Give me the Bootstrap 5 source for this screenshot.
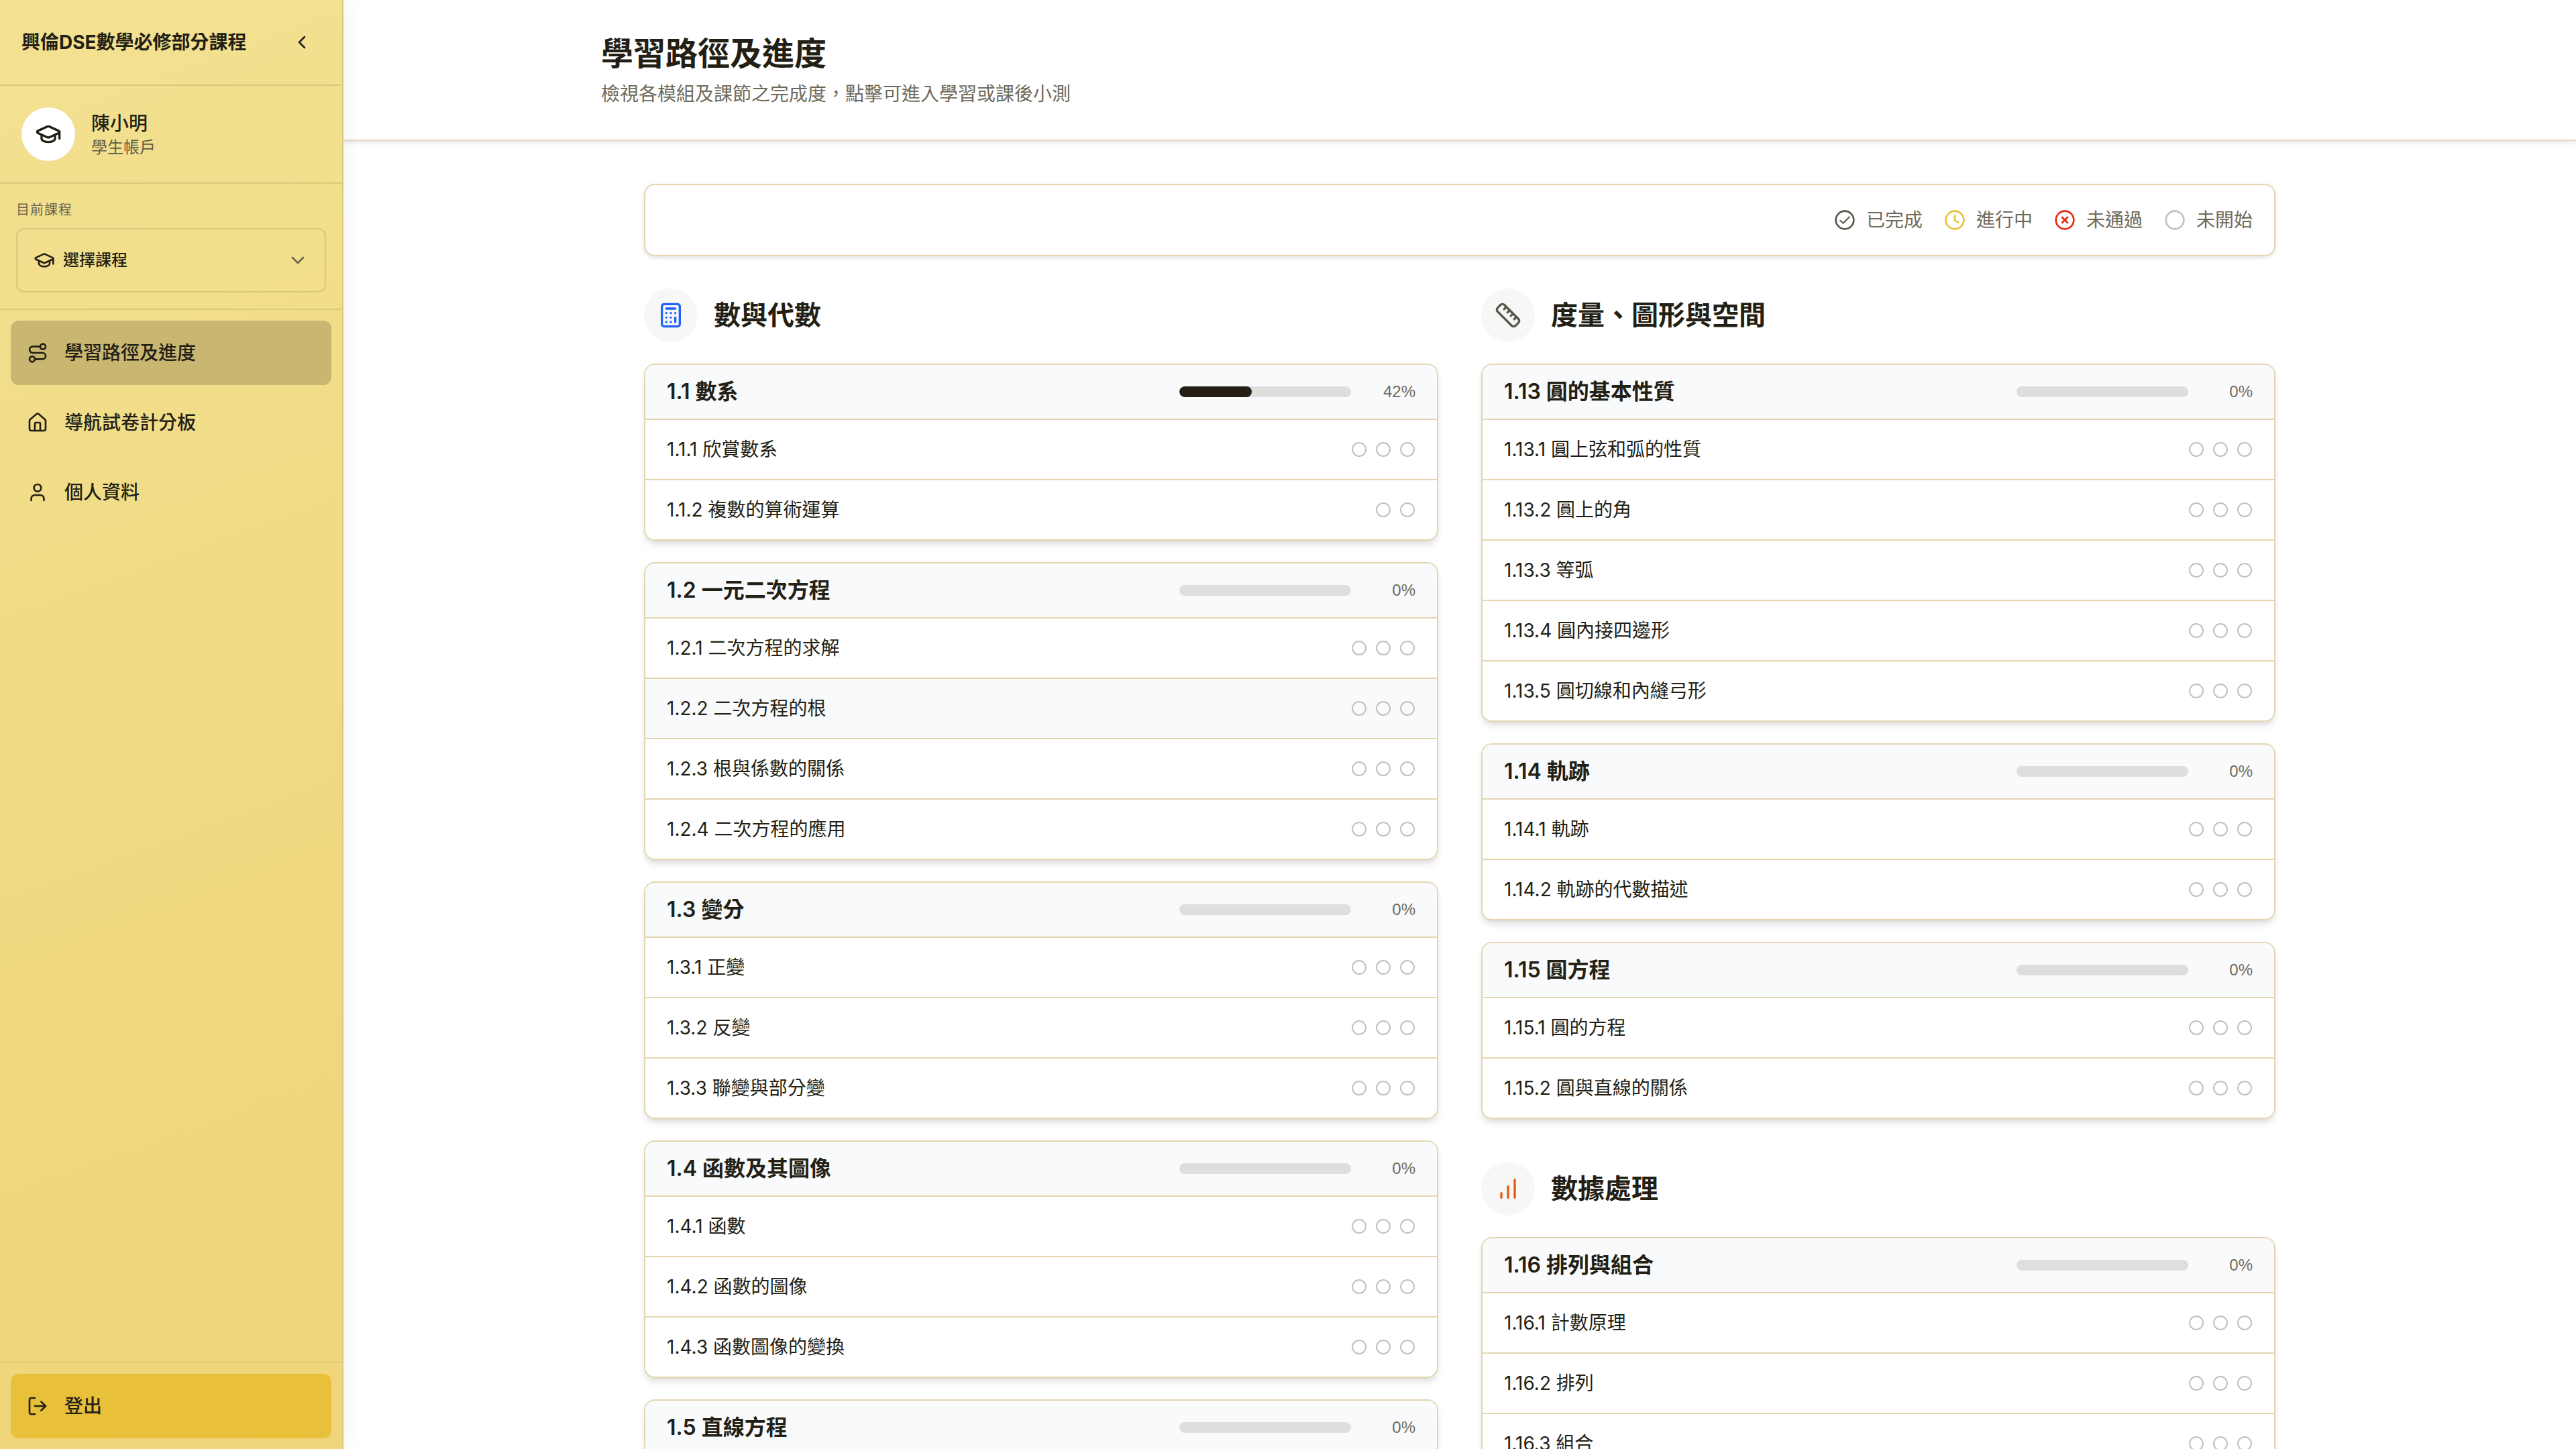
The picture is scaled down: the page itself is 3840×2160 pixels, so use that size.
<!DOCTYPE html>
<html lang="zh-Hant">
<head>
<meta charset="utf-8">
<meta name="viewport" content="width=device-width, initial-scale=1">
<title>學習路徑及進度</title>
<link href="https://cdn.jsdelivr.net/npm/bootstrap@5.3.0/dist/css/bootstrap.min.css" rel="stylesheet">
<style>
  :root { --ink: #231f15; --muted-ink: #6f6a5a; --line: #e3d6b0; --side-line: #dbc97c; }
  body { font-family: Inter, "Noto Sans CJK TC", sans-serif; font-size: 28px; line-height: 40px; color: var(--ink); background: #fff; }
  a { color: inherit; text-decoration: none; }
  svg { flex: none; fill: none; stroke: currentColor; stroke-width: 2; stroke-linecap: round; stroke-linejoin: round; display: block; }
  .i-24 { width: 24px; height: 24px; } .i-32 { width: 32px; height: 32px; } .i-40 { width: 40px; height: 40px; }
  .c-done, .c-ruler { color: #55584a; } .c-doing { color: #eac03a; } .c-fail { color: #e7290c; } .c-none { color: #c1c1bd; }
  .c-calc { color: #1e62fb; } .c-bars { color: #e8590c; }

  .side { width: 512px; border-right: 2px solid var(--side-line); background: linear-gradient(160deg, #f3e192 0%, #f1dc86 40%, #f0d67c 75%, #f0d57a 100%); box-shadow: 4px 0 24px rgba(30, 50, 80, .06); z-index: 2; }
  .side > * + * { border-top: 2px solid var(--side-line); }
  .side-top { height: 126px; padding: 0 32px; }
  .fold-btn { width: 56px; height: 56px; }
  .avatar { width: 80px; height: 80px; background: #fff; }
  .side-user { padding: 32px; }
  .side-user small { font-size: 24px; line-height: 32px; color: #5f5c47; }
  .side-user strong { line-height: 40px; font-weight: 500; }
  .side-course { padding: 24px; }
  .side-course label { font-size: 20px; line-height: 30px; margin-bottom: 12px; color: #6b6650; letter-spacing: 1px; }
  .picker { height: 96px; border: 2px solid var(--side-line); border-radius: 12px; position: relative; }
  .picker select { appearance: none; width: 100%; height: 100%; padding: 0 68px; border: 0; background: none; font-size: 24px; font-weight: 500; color: var(--ink); border-radius: 12px; }
  .picker svg { position: absolute; top: 50%; transform: translateY(-50%); pointer-events: none; }
  .picker .cap { left: 24px; } .picker .down { right: 24px; color: #6b6650; }
  .side-nav, .side-foot { padding: 16px; }
  .side-item { height: 96px; padding: 0 24px; border: 0; border-radius: 12px; font-weight: 500; color: var(--ink); text-align: left; }
  .side-item.current { background: #c8b671; }
  .side-item.leave { background: #e9c03a; width: 100%; }

  .page-head { border-bottom: 2px solid #e6dcc4; box-shadow: 0 2px 6px rgba(0, 0, 0, .12); padding: 48px 0; }
  .wrap { max-width: 2560px; width: 100%; margin: 0 auto; }
  .page-head h1 { font-size: 48px; line-height: 64px; font-weight: 700; margin: 0 0 8px; }
  .soft { color: var(--muted-ink); }
  .page-body { padding: 64px; }
  .legend-bar { border: 2px solid var(--line); border-radius: 16px; height: 108px; padding: 0 32px; gap: 32px; box-shadow: 0 2px 6px rgba(0, 0, 0, .12); margin-bottom: 48px; }
  .columns { display: grid; grid-template-columns: 1fr 1fr; gap: 64px; align-items: start; }
  .stack { display: flex; flex-direction: column; gap: 32px; }
  .topic { display: flex; flex-direction: column; gap: 64px; }
  .topic-head { gap: 24px; }
  .topic-head h2 { font-size: 40px; line-height: 56px; font-weight: 600; margin: 0; }
  .disc { width: 80px; height: 80px; background: #f7f7f6; }
  .unit { border: 2px solid var(--line); border-radius: 16px; overflow: hidden; box-shadow: 0 8px 12px -2px rgba(0, 0, 0, .1), 0 4px 8px -4px rgba(0, 0, 0, .1); }
  .unit-head { background: #f9fafc; height: 80px; padding: 0 32px; gap: 24px; }
  .unit-head h3 { font-size: 32px; line-height: 48px; font-weight: 600; margin: 0; }
  .unit-head .progress { width: 256px; height: 16px; border-radius: 8px; background: #dededc; }
  .unit-head .progress-bar { background: var(--ink); border-radius: 8px; }
  .pct { width: 72px; text-align: right; font-family: "Liberation Sans", sans-serif; font-size: 24px; color: var(--muted-ink); }
  .lesson { border-top: 2px solid var(--line); height: 90px; padding: 0 32px; }
  .lesson.hovered { background: #f9fafb; }
  .dots { gap: 12px; }
</style>
</head>
<body>
<svg width="0" height="0" class="position-absolute" aria-hidden="true">
  <symbol id="cap" viewBox="0 0 24 24"><path d="M21.42 10.922a1 1 0 0 0-.019-1.838L12.83 5.18a2 2 0 0 0-1.66 0L2.6 9.08a1 1 0 0 0 0 1.832l8.57 3.908a2 2 0 0 0 1.66 0z"/><path d="M22 10v6"/><path d="M6 12.5V16a6 3 0 0 0 12 0v-3.5"/></symbol>
  <symbol id="ring" viewBox="0 0 24 24"><circle cx="12" cy="12" r="10"/></symbol>
</svg>
<div class="d-flex vh-100 overflow-hidden">
  <aside class="side d-flex flex-column flex-shrink-0">
    <div class="side-top d-flex align-items-center justify-content-between">
      <span class="fw-bold">興倫DSE數學必修部分課程</span>
      <button class="fold-btn btn p-0 d-flex align-items-center justify-content-center" aria-label="收合"><svg class="i-32" viewBox="0 0 24 24"><path d="m15 18-6-6 6-6"/></svg></button>
    </div>
    <div class="side-user d-flex align-items-center gap-4">
      <span class="avatar rounded-circle d-flex align-items-center justify-content-center"><svg class="i-40"><use href="#cap"/></svg></span>
      <div class="d-flex flex-column"><strong>陳小明</strong><small>學生帳戶</small></div>
    </div>
    <div class="side-course">
      <label for="course" class="d-block">目前課程</label>
      <div class="picker"><svg class="cap i-32"><use href="#cap"/></svg><select id="course"><option>選擇課程</option></select><svg class="down i-32" viewBox="0 0 24 24"><path d="m6 9 6 6 6-6"/></svg></div>
    </div>
    <nav class="side-nav d-flex flex-column gap-2 flex-grow-1">
      <a href="#" class="side-item current d-flex align-items-center gap-4"><svg class="i-32" viewBox="0 0 24 24"><circle cx="6" cy="19" r="3"/><path d="M9 19h8.5a3.5 3.5 0 0 0 0-7h-11a3.5 3.5 0 0 1 0-7H15"/><circle cx="18" cy="5" r="3"/></svg>學習路徑及進度</a>
      <a href="#" class="side-item d-flex align-items-center gap-4"><svg class="i-32" viewBox="0 0 24 24"><path d="M15 21v-8a1 1 0 0 0-1-1h-4a1 1 0 0 0-1 1v8"/><path d="M3 10a2 2 0 0 1 .709-1.528l7-5.999a2 2 0 0 1 2.582 0l7 5.999A2 2 0 0 1 21 10v9a2 2 0 0 1-2 2H5a2 2 0 0 1-2-2z"/></svg>導航試卷計分板</a>
      <a href="#" class="side-item d-flex align-items-center gap-4"><svg class="i-32" viewBox="0 0 24 24"><circle cx="12" cy="7" r="4"/><path d="M19 21v-2a4 4 0 0 0-4-4H9a4 4 0 0 0-4 4v2"/></svg>個人資料</a>
    </nav>
    <div class="side-foot">
      <button class="side-item leave d-flex align-items-center gap-4"><svg class="i-32" viewBox="0 0 24 24"><path d="m16 17 5-5-5-5"/><path d="M21 12H9"/><path d="M9 21H5a2 2 0 0 1-2-2V5a2 2 0 0 1 2-2h4"/></svg>登出</button>
    </div>
  </aside>
  <div class="flex-grow-1 overflow-hidden">
    <header class="page-head">
      <div class="wrap"><h1>學習路徑及進度</h1><p class="soft m-0">檢視各模組及課節之完成度，點擊可進入學習或課後小測</p></div>
    </header>
    <main class="wrap page-body">
      <div class="legend-bar d-flex align-items-center justify-content-end soft">
        <span class="d-flex align-items-center gap-3"><svg class="i-32 c-done" viewBox="0 0 24 24"><circle cx="12" cy="12" r="10"/><path stroke-width="1.5" style="stroke-width:1.5" d="M6.8 12.6l3.4 3 7-7.2"/></svg>已完成</span>
        <span class="d-flex align-items-center gap-3"><svg class="i-32 c-doing" viewBox="0 0 24 24"><circle cx="12" cy="12" r="10"/><path d="M12 7v5.5l4 2"/></svg>進行中</span>
        <span class="d-flex align-items-center gap-3"><svg class="i-32 c-fail" viewBox="0 0 24 24"><circle cx="12" cy="12" r="10"/><path d="m15 9-6 6"/><path d="m9 9 6 6"/></svg>未通過</span>
        <span class="d-flex align-items-center gap-3"><svg class="i-32 c-none"><use href="#ring"/></svg>未開始</span>
      </div>
      <div class="columns">
        <div class="topic" id="left"></div>
        <div class="topic" id="right"></div>
      </div>
    </main>
  </div>
</div>
<script>
  const icons = {
    calc: '<svg class="i-40 c-calc" viewBox="0 0 24 24"><rect width="16" height="20" x="4" y="2" rx="2"/><path d="M8 6h8M16 14v4M16 10h.01M12 10h.01M8 10h.01M12 14h.01M8 14h.01M12 18h.01M8 18h.01"/></svg>',
    ruler: '<svg class="i-40 c-ruler" viewBox="0 0 24 24"><path d="M21.3 15.3a2.4 2.4 0 0 1 0 3.4l-2.6 2.6a2.4 2.4 0 0 1-3.4 0L2.7 8.7a2.41 2.41 0 0 1 0-3.4l2.6-2.6a2.41 2.41 0 0 1 3.4 0Z"/><path d="m14.5 12.5 2-2M11.5 9.5l2-2M8.5 6.5l2-2M17.5 15.5l2-2"/></svg>',
    bars: '<svg class="i-40 c-bars" viewBox="0 0 24 24"><path d="M12 20V10M18 20V4M6 20v-4"/></svg>'
  };
  const left = [
    { name: '數與代數', icon: 'calc', units: [
      ['1.1 數系', 42, ['1.1.1 欣賞數系', '1.1.2 複數的算術運算']],
      ['1.2 一元二次方程', 0, ['1.2.1 二次方程的求解', '1.2.2 二次方程的根', '1.2.3 根與係數的關係', '1.2.4 二次方程的應用']],
      ['1.3 變分', 0, ['1.3.1 正變', '1.3.2 反變', '1.3.3 聯變與部分變']],
      ['1.4 函數及其圖像', 0, ['1.4.1 函數', '1.4.2 函數的圖像', '1.4.3 函數圖像的變換']],
      ['1.5 直線方程', 0, []]
    ] }
  ];
  const right = [
    { name: '度量、圖形與空間', icon: 'ruler', units: [
      ['1.13 圓的基本性質', 0, ['1.13.1 圓上弦和弧的性質', '1.13.2 圓上的角', '1.13.3 等弧', '1.13.4 圓內接四邊形', '1.13.5 圓切線和內縫弓形']],
      ['1.14 軌跡', 0, ['1.14.1 軌跡', '1.14.2 軌跡的代數描述']],
      ['1.15 圓方程', 0, ['1.15.1 圓的方程', '1.15.2 圓與直線的關係']]
    ] },
    { name: '數據處理', icon: 'bars', units: [
      ['1.16 排列與組合', 0, ['1.16.1 計數原理', '1.16.2 排列', '1.16.3 組合']]
    ] }
  ];
  const ring = '<svg class="i-24"><use href="#ring"/></svg>';
  const lesson = t => `<a href="#" class="lesson d-flex align-items-center justify-content-between${t.startsWith('1.2.2') ? ' hovered' : ''}"><span>${t}</span><span class="dots c-none d-flex">${ring.repeat(t.startsWith('1.1.2') ? 2 : 3)}</span></a>`;
  const unit = ([t, p, ls]) => `<article class="unit"><div class="unit-head d-flex align-items-center"><h3 class="me-auto">${t}</h3><div class="progress" role="progressbar" aria-label="${t}" aria-valuenow="${p}"><div class="progress-bar" style="width:${p}%"></div></div><span class="pct">${p}%</span></div>${ls.map(lesson).join('')}</article>`;
  const topic = s => `<section class="stack"><div class="topic-head d-flex align-items-center"><span class="disc rounded-circle d-flex align-items-center justify-content-center">${icons[s.icon]}</span><h2>${s.name}</h2></div>${s.units.map(unit).join('')}</section>`;
  document.getElementById('left').innerHTML = left.map(topic).join('');
  document.getElementById('right').innerHTML = right.map(topic).join('');
</script>
<script src="https://cdn.jsdelivr.net/npm/bootstrap@5.3.0/dist/js/bootstrap.bundle.min.js"></script>
</body>
</html>
